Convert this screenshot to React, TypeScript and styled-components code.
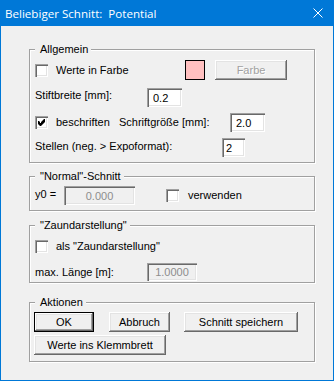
import React from "react";
import styled, { createGlobalStyle } from "styled-components";

const GlobalStyle = createGlobalStyle`
  body {
    margin: 0;
    background: #ffffff;
  }
`;

const Window = styled.div`
  width: 334px;
  height: 381px;
  box-sizing: border-box;
  border: 1px solid #0078d7;
  border-top: 0;
  background: #f0f0f0;
  font-family: "Liberation Sans", Arial, sans-serif;
  font-size: 11px;
  color: #000;
  overflow: hidden;
`;

const TitleBar = styled.div`
  height: 26px;
  margin: 0 -1px;
  padding: 0 11px 0 5px;
  background: #0078d7;
  color: #fff;
  display: flex;
  align-items: center;
  justify-content: space-between;
  font-family: "Open Sans", "Liberation Sans", sans-serif;
  font-size: 11.6px;
`;

const Client = styled.div`
  padding: 23px 0 0 28px;
`;

const Group = styled.div<{ $h: number; $mt: number; $px?: number }>`
  width: 286px;
  height: ${(p) => p.$h}px;
  margin-top: ${(p) => p.$mt}px;
  box-sizing: border-box;
  border: 1px solid #a0a0a0;
  box-shadow: inset 1px 1px #fff, 1px 1px #fff;
  padding-left: ${(p) => p.$px ?? 5}px;
`;

const GroupTitle = styled.div<{ $px?: number }>`
  width: fit-content;
  margin: -7px 0 0 ${(p) => 5 - (p.$px ?? 5)}px;
  padding: 0 3px 0 5px;
  line-height: 13px;
  background: #f0f0f0;
`;

const Row = styled.div<{ $mt: number; $h: number }>`
  display: flex;
  align-items: center;
  height: ${(p) => p.$h}px;
  margin-top: ${(p) => p.$mt}px;
`;

const Label = styled.span<{ $w?: number; $ml?: number; $up?: number }>`
  ${(p) => (p.$w ? `width: ${p.$w}px;` : "")}
  flex-shrink: 0;
  margin-left: ${(p) => p.$ml ?? 0}px;
  margin-bottom: ${(p) => (p.$up ?? 0) * 2}px;
  white-space: nowrap;
  line-height: 13px;
`;

const sunken =
  "inset 1px 1px #a0a0a0, inset 2px 2px #696969, inset -1px -1px #fff, inset -2px -2px #e3e3e3";

const Edit = styled.input<{ $w: number; $center?: boolean; $pl?: number }>`
  width: ${(p) => p.$w}px;
  height: 100%;
  box-sizing: border-box;
  margin: 0;
  border: 0;
  outline: none;
  padding: 0 0 0 ${(p) => (p.$center ? 0 : p.$pl ?? 6)}px;
  text-align: ${(p) => (p.$center ? "center" : "left")};
  font: inherit;
  color: #000;
  background: #fff;
  box-shadow: ${sunken};
  &:disabled {
    background: #f0f0f0;
    color: #8d8d8d;
  }
`;

const CheckBox = styled.span<{ $ml?: number }>`
  width: 13px;
  height: 13px;
  flex-shrink: 0;
  margin-left: ${(p) => p.$ml ?? 0}px;
  background: #fff;
  box-shadow: ${sunken};
  display: block;
  svg {
    display: block;
  }
`;

const Swatch = styled.span`
  width: 20px;
  height: 20px;
  box-sizing: border-box;
  border: 1px solid #000;
  background: #ffc0c0;
  flex-shrink: 0;
`;

const Button = styled.button<{ $w: number; $ml?: number; $default?: boolean }>`
  width: ${(p) => p.$w}px;
  height: 100%;
  flex-shrink: 0;
  margin: 0 0 0 ${(p) => p.$ml ?? 0}px;
  padding: 0;
  box-sizing: border-box;
  border: ${(p) => (p.$default ? "1px solid #000" : "0")};
  background: #f0f0f0;
  font: inherit;
  color: #000;
  box-shadow: inset -1px -1px #696969, inset 1px 1px #fff, inset -2px -2px #a0a0a0,
    inset 2px 2px #e3e3e3;
  &:disabled {
    color: #a0a0a0;
    text-shadow: 1px 1px #fff;
  }
`;

const Check: React.FC<{ checked?: boolean; ml?: number }> = ({ checked, ml }) => (
  <CheckBox $ml={ml}>
    {checked && (
      <svg width="13" height="13" viewBox="0 0 13 13">
        <polygon
          points="3,5 4,5 5,6 5,7 6,7 6,6 9,3 10,3 10,6 6,10 5,10 3,8"
          fill="#000"
        />
      </svg>
    )}
  </CheckBox>
);

const CloseIcon = () => (
  <svg width="10" height="10" viewBox="0 0 10 10">
    <path d="M0.5 0.5 L9.5 9.5 M9.5 0.5 L0.5 9.5" stroke="#fff" strokeWidth="1" />
  </svg>
);

export default function App() {
  return (
    <>
      <GlobalStyle />
      <Window>
        <TitleBar>
          <span>Beliebiger Schnitt:&nbsp; Potential</span>
          <CloseIcon />
        </TitleBar>
        <Client>
          <Group $h={114} $mt={0}>
            <GroupTitle>Allgemein</GroupTitle>
            <Row $mt={4} $h={20}>
              <Check />
              <Label $ml={8} $w={129}>Werte in Farbe</Label>
              <Swatch />
              <Button $w={72} $ml={10} disabled>
                Farbe
              </Button>
            </Row>
            <Row $mt={8} $h={19}>
              <Label $w={112} $up={2}>Stiftbreite [mm]:</Label>
              <Edit $w={35} readOnly value="0.2" />
            </Row>
            <Row $mt={6} $h={19}>
              <Check checked />
              <Label $ml={8} $w={63}>beschriften</Label>
              <Label $w={111}>Schriftgröße [mm]:</Label>
              <Edit $w={35} readOnly value="2.0" />
            </Row>
            <Row $mt={6} $h={19}>
              <Label $w={187} $up={1}>Stellen (neg. &gt; Expoformat):</Label>
              <Edit $w={23} $pl={4} readOnly value="2" />
            </Row>
          </Group>

          <Group $h={35} $mt={13}>
            <GroupTitle>"Normal"-Schnitt</GroupTitle>
            <Row $mt={3} $h={19}>
              <Label $w={29} $up={1}>y0 =</Label>
              <Edit $w={71} $center disabled value="0.000" />
              <Check ml={31} />
              <Label $ml={9}>verwenden</Label>
            </Row>
          </Group>

          <Group $h={58} $mt={14}>
            <GroupTitle>"Zaundarstellung"</GroupTitle>
            <Row $mt={8} $h={13}>
              <Check />
              <Label $ml={8}>als "Zaundarstellung"</Label>
            </Row>
            <Row $mt={10} $h={18}>
              <Label $w={112}>max. Länge [m]:</Label>
              <Edit $w={50} $center disabled value="1.0000" />
            </Row>
          </Group>

          <Group $h={60} $mt={19} $px={4}>
            <GroupTitle $px={4}>Aktionen</GroupTitle>
            <Row $mt={3} $h={20}>
              <Button $w={60} $default>
                OK
              </Button>
              <Button $w={61} $ml={15}>
                Abbruch
              </Button>
              <Button $w={114} $ml={14}>
                Schnitt speichern
              </Button>
            </Row>
            <Row $mt={3} $h={20}>
              <Button $w={132}>Werte ins Klemmbrett</Button>
            </Row>
          </Group>
        </Client>
      </Window>
    </>
  );
}
